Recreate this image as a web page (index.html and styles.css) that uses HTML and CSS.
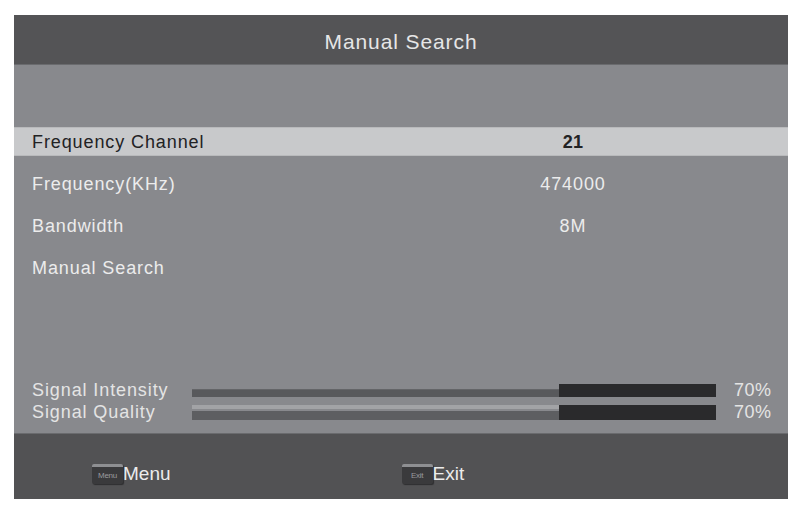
FILE: index.html
```html
<!DOCTYPE html>
<html>
<head>
<meta charset="utf-8">
<link rel="stylesheet" href="styles.css">
</head>
<body>
<div class="panel">
  <div class="header">Manual Search</div>
  <div class="content">
    <div class="rows">
      <div class="row active"><span class="label">Frequency Channel</span><span class="value">21</span></div>
      <div class="row"><span class="label">Frequency(KHz)</span><span class="value">474000</span></div>
      <div class="row"><span class="label">Bandwidth</span><span class="value">8M</span></div>
      <div class="row"><span class="label">Manual Search</span><span class="value"></span></div>
    </div>
    <div class="signals">
      <div class="sig intensity"><span class="sig-label">Signal Intensity</span><div class="bar"><div class="fill" style="width:70%"></div><div class="rest"></div></div><span class="pct">70%</span></div>
      <div class="sig quality"><span class="sig-label">Signal Quality</span><div class="bar"><div class="fill" style="width:70%"></div><div class="rest"></div></div><span class="pct">70%</span></div>
    </div>
  </div>
  <div class="footer">
    <div class="btn menu"><span class="key">Menu</span><span class="btn-text">Menu</span></div>
    <div class="btn exit"><span class="key">Exit</span><span class="btn-text">Exit</span></div>
  </div>
</div>
</body>
</html>
```

FILE: styles.css
```css
html, body {
  margin: 0;
  padding: 0;
  background: #ffffff;
}
body {
  font-family: "Liberation Sans", Arial, sans-serif;
}
.panel {
  margin: 15px 0 0 14px;
  width: 774px;
  height: 484px;
  display: flex;
  flex-direction: column;
  background: #88898d;
}
.header {
  height: 50px;
  padding-top: 4px;
  background: #545456;
  color: #e6e6e6;
  font-size: 21px;
  letter-spacing: 0.9px;
  display: flex;
  align-items: center;
  justify-content: center;
  border-bottom: 1px solid #6a6b6e;
  box-sizing: border-box;
}
.content {
  flex: 1;
  display: flex;
  flex-direction: column;
  justify-content: space-between;
  padding: 62px 0 10px 0;
  box-sizing: border-box;
}
.rows {
  display: flex;
  flex-direction: column;
  gap: 13px;
}
.row {
  height: 29px;
  padding-top: 2px;
  display: flex;
  align-items: center;
  color: #ececec;
  font-size: 18px;
  letter-spacing: 0.9px;
  box-sizing: border-box;
}
.row.active {
  background: #c8c9cb;
  color: #222224;
  border-top: 1px solid #b9babc;
  border-bottom: 1px solid #b9babc;
}
.row.active .value {
  font-weight: bold;
  letter-spacing: 0.3px;
}
.label {
  width: 459px;
  padding-left: 18px;
  box-sizing: border-box;
}
.value {
  width: 200px;
  text-align: center;
}
.signals {
  display: flex;
  flex-direction: column;
}
.sig {
  height: 22px;
  display: flex;
  align-items: center;
  color: #e4e4e4;
  font-size: 18px;
  letter-spacing: 0.9px;
}
.sig-label {
  width: 178px;
  padding-left: 18px;
  box-sizing: border-box;
  white-space: nowrap;
}
.bar {
  width: 524px;
  height: 13px;
  display: flex;
  align-items: flex-end;
}
.fill {
  height: 8px;
  box-sizing: border-box;
}
.intensity .fill {
  background: #58595c;
  border-top: 1px solid #646568;
}
.quality .bar {
  height: 15px;
}
.quality .fill {
  height: 15px;
  background: linear-gradient(#a2a3a6 0, #a2a3a6 4px, #88898d 4px, #88898d 6px, #5d5e61 6px);
}
.rest {
  flex: 1;
  height: 100%;
  background: #2a2a2c;
}
.pct {
  margin-left: 18px;
  letter-spacing: 0.5px;
}
.footer {
  height: 66px;
  background: #525254;
  display: flex;
  align-items: center;
  border-top: 1px solid #6a6b6e;
  box-sizing: border-box;
  padding-top: 15px;
}
.btn {
  display: flex;
  align-items: center;
  color: #ececec;
  font-size: 19px;
}
.menu {
  margin-left: 78px;
}
.exit {
  margin-left: 231px;
}
.key {
  width: 31px;
  height: 20px;
  box-sizing: border-box;
  background: #3a3a3c;
  border-top: 3px solid #8e8f92;
  border-radius: 2px;
  color: #9a9b9e;
  font-size: 8px;
  display: flex;
  align-items: center;
  justify-content: center;
  letter-spacing: -0.3px;
  box-shadow: 1px 1px 1px #2e2e30;
}
```
